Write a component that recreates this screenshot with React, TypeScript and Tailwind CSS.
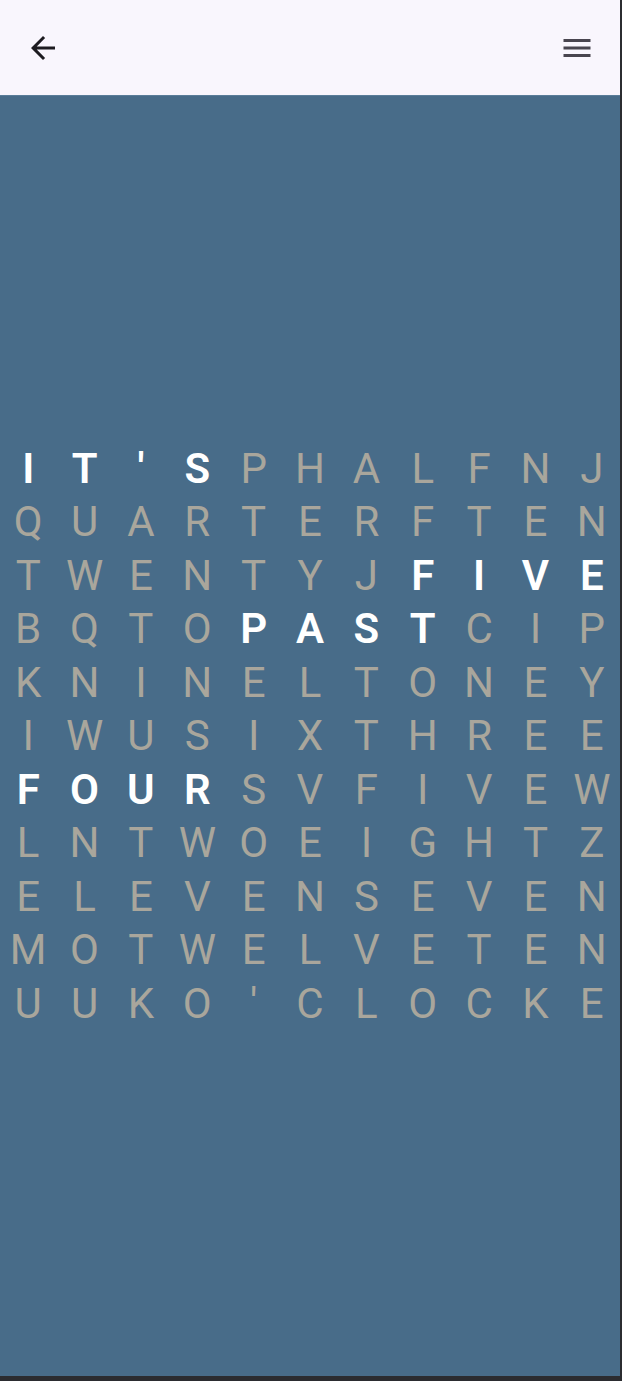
import React from 'react';

const ROWS = [
  'IT\'SPHALFNJ',
  'QUARTERFTEN',
  'TWENTYJFIVE',
  'BQTOPASTCIP',
  'KNINELTONEY',
  'IWUSIXTHREE',
  'FOURSVFIVEW',
  'LNTWOEIGHTZ',
  'ELEVENSEVEN',
  'MOTWELVETEN',
  'UUKO\'CLOCKE',
];

// lit cells: [row, startCol, length]
const LIT: [number, number, number][] = [
  [0, 0, 4],
  [2, 7, 4],
  [3, 4, 4],
  [6, 0, 4],
];

const isLit = (r: number, c: number) => LIT.some(([row, s, n]) => row === r && c >= s && c < s + n);

const BackIcon = () => (
  <svg viewBox="0 0 24 24" className="w-9 h-9 fill-[#1d1b20]">
    <path d="M20 11H7.83l5.59-5.59L12 4l-8 8 8 8 1.41-1.41L7.83 13H20v-2z" />
  </svg>
);

const MenuIcon = () => (
  <svg viewBox="0 0 24 24" className="w-9 h-9 fill-[#49454f]">
    <path d="M3 18h18v-2H3v2zm0-5h18v-2H3v2zm0-7v2h18V6H3z" />
  </svg>
);

const Letter: React.FC<{ ch: string; lit: boolean }> = ({ ch, lit }) => (
  <div
    className={
      'flex items-center justify-center h-[53.5px] text-[42px] leading-none ' +
      (lit ? 'text-white font-semibold' : 'text-[#a9a69c] font-normal')
    }
  >
    {ch}
  </div>
);

export default function App() {
  return (
    <div className="w-[622px] h-[1381px] bg-[#2b2c30] font-['Roboto',sans-serif]">
      <div className="w-[620px] h-[1376px] flex flex-col">
        <header className="h-[96px] shrink-0 bg-[#f9f6fd] flex items-center justify-between px-[25px] pt-px border-b border-[#5a7d99]">
          <BackIcon />
          <MenuIcon />
        </header>
        <main className="flex-1 bg-[#486c89] flex items-center">
          <div className="w-full grid grid-cols-11">
            {ROWS.map((row, r) =>
              row.split('').map((ch, c) => <Letter key={r + '-' + c} ch={ch} lit={isLit(r, c)} />)
            )}
          </div>
        </main>
      </div>
    </div>
  );
}
